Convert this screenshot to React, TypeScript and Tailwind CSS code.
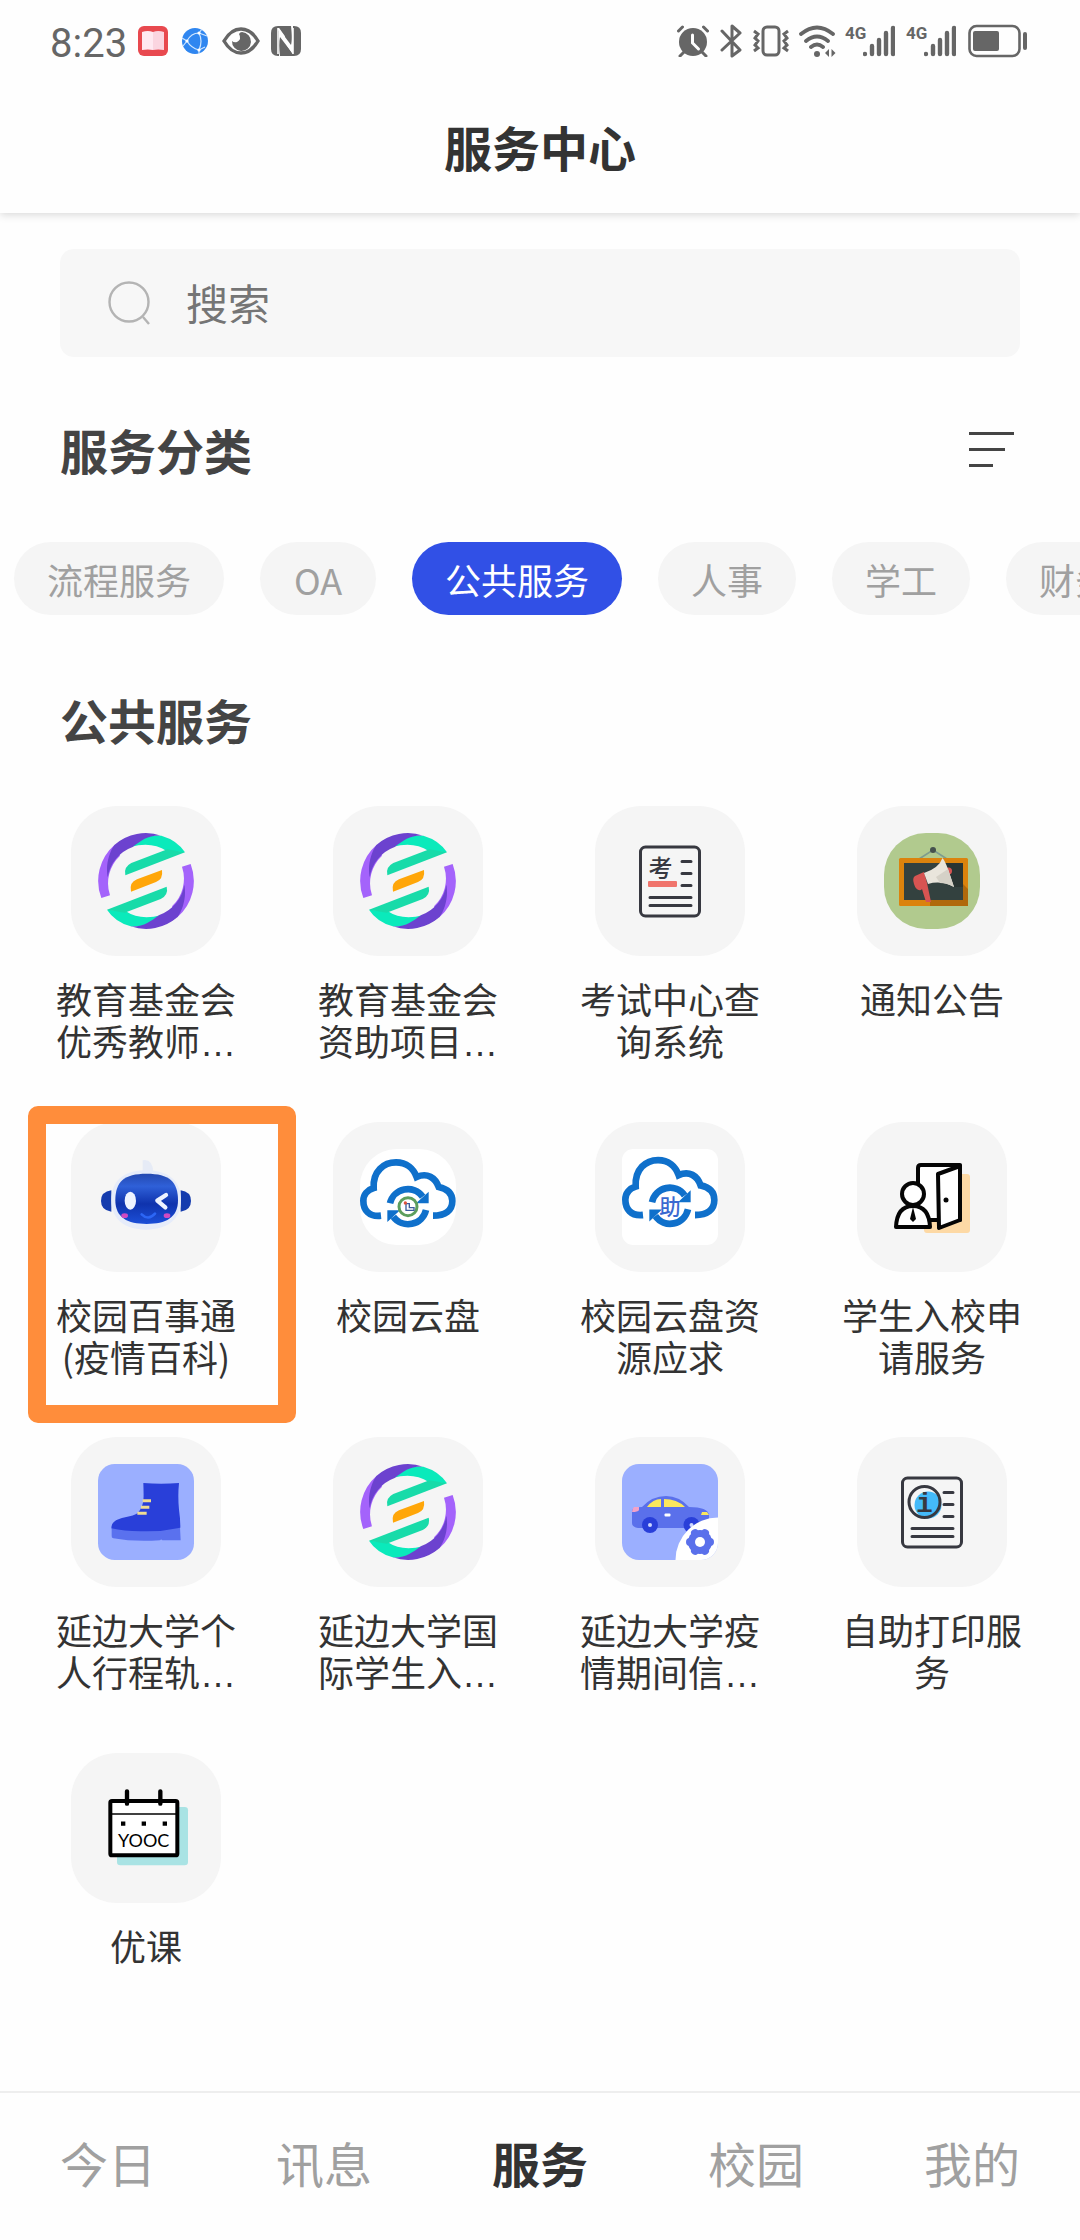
import { useState } from 'react';
import type { ReactNode } from 'react';

interface Service {
  name: string;
  truncated?: boolean;
  icon: ReactNode;
  highlighted?: boolean;
}

/* ---------- status bar ---------- */

function SignalIcon() {
  return (
    <div className="flex items-start">
      <span className="w-[18px] font-[Roboto,sans-serif] text-[17px] leading-[17px] font-bold">4G</span>
      <svg width="32" height="32" viewBox="0 0 32 32" fill="none" stroke="currentColor" strokeWidth="4.400" strokeLinecap="round">
        <path d="M2 29v0M9 21v8M16 15v14M23 8v21M30 3v26" />
      </svg>
    </div>
  );
}

function StatusBar() {
  return (
    <div className="flex h-[82px] items-center justify-between pr-[52px] pl-[50px] text-[#666]">
      <div className="flex items-center">
        <span className="mr-[11px] pt-[5px] font-[Roboto,sans-serif] text-[40px] leading-[40px]">8:23</span>
        <svg className="mr-[14px]" width="30" height="30" viewBox="0 0 30 30">
          <rect width="30" height="30" rx="6" fill="#e8494f" />
          <path d="M4 6q6-2 11 0v18q-5-1-11 0z" fill="#ffe9f1" />
          <path d="M15 6q5-2 11 0v18q-6-1-11 0z" fill="#fbd5e0" />
        </svg>
        <svg className="mr-[14px]" width="26" height="26" viewBox="0 0 26 26">
          <circle cx="13" cy="13" r="13" fill="#2f86f0" />
          <g fill="none" stroke="#cfe6ff" strokeWidth="1.2">
            <path d="M0 10l5 3Q9 5 17 5l3-4M5 13q4 7 12 9v4M17 5q4 8 0 17M5 13l-4 5M17 5l8 3M17 22l6-3" />
          </g>
          <g fill="#fff">
            <circle cx="5" cy="13" r="1.600" />
            <circle cx="17" cy="5" r="1.600" />
            <circle cx="17" cy="22" r="1.600" />
          </g>
        </svg>
        <svg className="mr-[11px]" width="38" height="28" viewBox="0 0 38 28">
          <path d="M2 14Q9 2 19 2t17 12q-7 12-17 12T2 14z" fill="none" stroke="currentColor" strokeWidth="3.400" />
          <path d="M20 5a9.500 9.500 0 1 1-10 9q2 2 5 1 5-3 2-8 1-2 3-2z" fill="currentColor" />
        </svg>
        <svg width="30" height="30" viewBox="0 0 30 30">
          <path d="M7 0h13c1 9 1 15 0 19L8 3v27H7q-7 0-7-7V7q0-7 7-7z" fill="currentColor" />
          <path d="M22 0h1q7 0 7 7v16q0 7-7 7H9c-1-8-1-14 0-19l13 17z" fill="currentColor" />
          <path d="M7 2v26M22 2v26M7.500 2.500l6 8.500M16 18l6 9" stroke="#fefefe" strokeWidth="1.600" fill="none" />
        </svg>
      </div>
      <div className="flex items-center">
        <svg className="mr-[11px]" width="32" height="32" viewBox="0 0 32 32">
          <circle cx="16" cy="17" r="14" fill="currentColor" />
          <path d="M1.500 6l4-4M30.500 6l-4-4M3 31l4-4M29 31l-4-4" stroke="currentColor" strokeWidth="3" strokeLinecap="round" />
          <path d="M15.500 10v8l6 6" fill="none" stroke="#fefefe" strokeWidth="3" strokeLinecap="round" />
        </svg>
        <svg className="mr-[10px]" width="22" height="34" viewBox="0 0 22 34">
          <path d="M2 7l18 19-8 6V2l8 7L2 26" fill="none" stroke="currentColor" strokeWidth="3" strokeLinecap="round" strokeLinejoin="round" />
        </svg>
        <svg className="mr-[9px]" width="38" height="32" viewBox="0 0 38 32" fill="none" stroke="currentColor" strokeWidth="3">
          <rect x="11" y="2" width="16" height="28" rx="4" />
          <path d="M2 6l4 3-3 4 3 3-3 4 3 3-4 3M36 6l-4 3 3 4-3 3 3 4-3 3 4 3" />
        </svg>
        <svg className="mr-[8px]" width="38" height="32" viewBox="0 0 38 32">
          <g fill="none" stroke="currentColor" strokeWidth="3.800" strokeLinecap="round">
            <path d="M2 9Q18-4 34 9M7 16q11-9 22 0M12 22q6-5 12 0" />
          </g>
          <circle cx="18" cy="29" r="3" fill="currentColor" />
          <path d="M30 24v8l-4-4zM32.500 24v8l4-4z" fill="currentColor" />
        </svg>
        <div className="mr-[11px]">
          <SignalIcon />
        </div>
        <div className="mr-[12px]">
          <SignalIcon />
        </div>
        <svg width="60" height="34" viewBox="0 0 60 34">
          <rect x="1.500" y="2" width="50" height="30" rx="7" fill="none" stroke="currentColor" strokeWidth="2.600" />
          <rect x="5" y="7" width="26" height="20" rx="2" fill="currentColor" />
          <path d="M57 10v14" stroke="currentColor" strokeWidth="4" strokeLinecap="round" />
        </svg>
      </div>
    </div>
  );
}

/* ---------- service icons ---------- */

function FoundationHalf() {
  return (
    <>
      <path d="M10 195A144 144 0 0 1 50 35L66 68A114 114 0 0 0 36 187z" fill="#a463fb" />
      <path d="M98 42Q130 2 190 8 238 22 261 58L206 54Q160 24 98 42z" fill="#0aeabb" />
      <path d="M29 133C22 95 34 56 50 35A144 144 0 0 1 190 8C150 6 132 22 104 42A116 116 0 0 0 29 133z" fill="#6c42cf" />
      <path d="M208 49l53 9L82 127q-6-25 18-37z" fill="#18dba9" />
    </>
  );
}

function FoundationIcon() {
  return (
    <svg className="size-24" viewBox="0 0 288 288">
      <FoundationHalf />
      <g transform="rotate(180 144 144)">
        <FoundationHalf />
      </g>
      <path d="M99 176q-6-28 18-37l75-28q4 28-18 36z" fill="#ffa609" />
    </svg>
  );
}

function DocFrame({ children }: { children: ReactNode }) {
  return (
    <svg className="size-24" viewBox="0 0 96 96">
      <g fill="none" stroke="#373840" strokeWidth="3">
        <rect x="18.500" y="14" width="59" height="69" rx="5" />
        <path d="M60 28.500h9M60 40.500h9M60 52.500h9M28 64.500h41M28 72.500h41" strokeLinecap="round" />
      </g>
      {children}
    </svg>
  );
}

function ExamIcon() {
  return (
    <DocFrame>
      <rect x="26" y="48" width="29" height="6" rx="1" fill="#f0746c" />
      <text x="26.500" y="44" fontSize="24" fontWeight="500" fontFamily="Noto Sans CJK SC, sans-serif" fill="#373840">考</text>
    </DocFrame>
  );
}

function PrintIcon() {
  return (
    <DocFrame>
      <circle cx="44" cy="41" r="13.500" fill="#44bafa" />
      <circle cx="40.500" cy="38" r="15.500" fill="none" stroke="#373840" strokeWidth="3" />
      <text x="40.500" y="48" fontSize="28" fontWeight="700" textAnchor="middle" fontFamily="Liberation Mono, monospace" fill="#373840">i</text>
    </DocFrame>
  );
}

function NoticeIcon() {
  return (
    <svg className="size-24" viewBox="0 0 96 96">
      <rect width="96" height="96" rx="42" fill="#b1ca8e" />
      <path d="M35 26l14-9 14 9" fill="none" stroke="#7e9c8e" strokeWidth="1.500" />
      <circle cx="49" cy="17" r="3" fill="#46524e" />
      <rect x="15" y="25" width="69" height="48" rx="1.500" fill="#db830d" />
      <path d="M78 50l6 6v17H46v-6h32z" fill="#b0690c" />
      <rect x="20" y="30" width="59" height="37" fill="#33413f" />
      <path d="M61 30h18v24H70z" fill="#2a3533" />
      <circle cx="64.500" cy="38" r="3.500" fill="#d75452" />
      <path d="M40 39l-9 4q-3 2-1 8 2 7 7 6l1-1 4 13h5l-4-19z" fill="#d75452" />
      <path d="M40 40Q55 35 58.500 25 61 28 64 36l6 18q-13-7-26-3z" fill="#e9e5dc" />
      <path d="M52 44l12-8 6 18q-7-4-14-4z" fill="#d5d1c7" />
    </svg>
  );
}

function RobotIcon() {
  return (
    <svg className="size-24" viewBox="0 0 288 288">
      <defs>
        <linearGradient id="face" x1="0" y1="0" x2="0" y2="1">
          <stop offset="0" stopColor="#2449b0" />
          <stop offset="0.250" stopColor="#2f60d8" />
          <stop offset="0.600" stopColor="#0f33ad" />
          <stop offset="1" stopColor="#1c4fd8" />
        </linearGradient>
      </defs>
      <path d="M134 68V34q28-6 32 34z" fill="#e6ebf6" />
      <path d="M40 124v64q-31-4-31-32t31-32zM248 124v64q31-4 31-32t-31-32z" fill="#153cae" />
      <path d="M144 64c70 0 105 34 105 90 0 58-43 88-105 88S40 212 40 154c0-56 34-90 104-90z" fill="#e6ecfa" />
      <path d="M146 74c68 0 94 24 94 80 0 52-36 71-94 71s-94-19-94-71c0-56 26-80 94-80z" fill="url(#face)" />
      <ellipse cx="97" cy="155" rx="17" ry="27" fill="#eef3ff" />
      <path d="M204 138l-26 17 24 20" fill="none" stroke="#eef3ff" strokeWidth="13" strokeLinecap="round" strokeLinejoin="round" />
      <ellipse cx="80" cy="200" rx="10" ry="7" fill="#d04ac2" />
      <ellipse cx="207" cy="200" rx="10" ry="7" fill="#d04ac2" />
      <path d="M131 196q20 20 40-2" fill="none" stroke="#2c66f5" strokeWidth="8" strokeLinecap="round" />
    </svg>
  );
}

function CloudShape() {
  return (
    <>
      <g fill="none" stroke="#0f70cb" strokeWidth="20">
        <path d="M63 200C26 204 10 182 10 155c0-18 12-32 31-38C38 66 72 40 108 40c32 0 53 19 62 44 32-14 56 2 66 30 28 6 41 22 41 42 0 28-20 44-58 44" />
        <path d="M90 163a55 55 0 0 1 98-20M198 183a55 55 0 0 1-98 20" />
      </g>
      <path d="M206 128v35h-38zM82 219v-35h38z" fill="#0f70cb" />
    </>
  );
}

function CloudIcon() {
  return (
    <svg className="size-24" viewBox="0 0 288 288">
      <rect width="288" height="288" rx="110" fill="#fff" />
      <CloudShape />
      <circle cx="144" cy="173" r="27" fill="#fff" stroke="#5c9e5d" strokeWidth="9" />
      <path d="M138 164v20h24v-8h-14v-12z" fill="none" stroke="#3c5c9c" strokeWidth="4" />
      <circle cx="136" cy="162" r="5" fill="#e0533c" />
    </svg>
  );
}

function CloudHelpIcon() {
  return (
    <svg className="size-24" viewBox="0 0 288 288">
      <rect width="288" height="288" rx="34" fill="#fff" />
      <g transform="translate(0 -8) scale(1 1.030)">
        <CloudShape />
      </g>
      <text x="144" y="198" fontSize="64" fontWeight="500" textAnchor="middle" fontFamily="Noto Sans CJK SC, sans-serif" fill="#3a69d0">助</text>
    </svg>
  );
}

function VisitorIcon() {
  return (
    <svg className="size-24" viewBox="0 0 96 96">
      <rect x="40" y="25" width="46" height="59" rx="3" fill="#fdd9a5" />
      <g fill="#fff" stroke="#050505" strokeWidth="4" strokeLinejoin="round">
        <path d="M34 71V19q0-3 3-3h39v55z" />
        <path d="M54 25l22-8v54l-21 8z" />
        <circle cx="29" cy="45" r="11" />
        <path d="M12 78q1-21 17-21t17 21z" />
      </g>
      <path d="M29 58l-3 12 3 3 3-3z" fill="#050505" />
      <circle cx="62" cy="51" r="2.500" fill="#050505" />
    </svg>
  );
}

function BootIcon() {
  return (
    <svg className="size-24" viewBox="0 0 288 288">
      <rect width="288" height="288" rx="50" fill="#9bafff" />
      <path d="M41 192l205-2 2 39h-55q-3-5-7 0-80 5-140-6-6-1-5-8z" fill="#5a71ee" />
      <path d="M136 57q53 5 107 0-4 40 0 80 4 26 4 54-55 12-110 11-55 1-97-9c0-40 66-28 82-50 18-20 15-46 14-86z" fill="#293fd9" />
      <path d="M134 110h25M129 130h25M118 148h28" stroke="#efdc92" strokeWidth="9" />
    </svg>
  );
}

function CarIcon() {
  return (
    <svg className="size-24" viewBox="0 0 96 96">
      <defs>
        <clipPath id="car-tile">
          <rect width="96" height="96" rx="17" />
        </clipPath>
      </defs>
      <g clipPath="url(#car-tile)">
        <rect width="96" height="96" fill="#9bafff" />
        <path d="M10 47q0-4 10-4 10-11 24-11 13 0 23 11 19 0 20 8v13H16q-6-1-6-5z" fill="#5a70eb" />
        <path d="M25 43q6-8 14-8v8zM42 35q13 0 21 8H42z" fill="#fbe75d" />
        <path d="M12 43h5v3q-1 2-7 2 0-3 2-5z" fill="#f3a2c8" />
        <path d="M80 48h5l2 3h-8z" fill="#fbe75d" />
        <rect x="42.500" y="49.500" width="6" height="3" rx="1" fill="#fff" />
        <circle cx="28" cy="61" r="8" fill="#293fd9" />
        <circle cx="28" cy="61" r="2" fill="#cdd7ff" />
        <circle cx="69.500" cy="61" r="8" fill="#293fd9" />
        <circle cx="69.500" cy="61" r="2" fill="#cdd7ff" />
        <circle cx="96" cy="96" r="42.500" fill="#fff" />
      </g>
      <g stroke="#5a70eb" strokeWidth="8" strokeLinecap="round">
        <path d="M68 78h20M73 69.300l10 17.400M73 86.700l10-17.400" />
      </g>
      <circle cx="78" cy="78" r="12" fill="#5a70eb" />
      <circle cx="78" cy="78" r="5" fill="#fff" />
    </svg>
  );
}

function CourseIcon() {
  return (
    <svg className="size-24" viewBox="0 0 288 288">
      <rect x="57" y="81" width="213" height="175" rx="10" fill="#a9e3e4" />
      <rect x="37" y="63" width="201" height="163" rx="5" fill="#fff" stroke="#000" strokeWidth="12" />
      <path d="M37 102h201" stroke="#000" strokeWidth="5" />
      <path d="M87 34v37M187 34v37" stroke="#000" strokeWidth="13" strokeLinecap="round" />
      <path d="M69 131h13M131 131h13M194 131h13" stroke="#000" strokeWidth="13" />
      <text x="137" y="201" fontSize="54" textAnchor="middle" fontFamily="Lato, sans-serif" fill="#000">YOOC</text>
    </svg>
  );
}

/* ---------- data ---------- */

const categories = ['流程服务', 'OA', '公共服务', '人事', '学工', '财务'];

const services: Service[] = [
  { name: '教育基金会优秀教师', truncated: true, icon: <FoundationIcon /> },
  { name: '教育基金会资助项目', truncated: true, icon: <FoundationIcon /> },
  { name: '考试中心查询系统', icon: <ExamIcon /> },
  { name: '通知公告', icon: <NoticeIcon /> },
  { name: '校园百事通(疫情百科)', icon: <RobotIcon />, highlighted: true },
  { name: '校园云盘', icon: <CloudIcon /> },
  { name: '校园云盘资源应求', icon: <CloudHelpIcon /> },
  { name: '学生入校申请服务', icon: <VisitorIcon /> },
  { name: '延边大学个人行程轨', truncated: true, icon: <BootIcon /> },
  { name: '延边大学国际学生入', truncated: true, icon: <FoundationIcon /> },
  { name: '延边大学疫情期间信', truncated: true, icon: <CarIcon /> },
  { name: '自助打印服务', icon: <PrintIcon /> },
  { name: '优课', icon: <CourseIcon /> },
];

const tabs = ['今日', '讯息', '服务', '校园', '我的'];

function ServiceItem({ service }: { service: Service }) {
  return (
    <li className="relative flex justify-center">
      <a href="#" className="flex flex-col items-center">
        <span className="flex size-[150px] items-center justify-center rounded-[46px] bg-[#f5f5f5]">
          {service.icon}
        </span>
        <span className="mt-[21px] mb-[3px] min-h-[84px] w-[184px] text-center text-[36px] leading-[42px] text-[#333]">
          {service.name}
          {service.truncated && (
            <span className="font-['Liberation_Sans',sans-serif] leading-none">…</span>
          )}
        </span>
      </a>
      {service.highlighted && (
        <span className="pointer-events-none absolute -top-4 -right-[19px] left-[13px] h-[317px] rounded-[10px] border-[18px] border-[#ff8d3b]" />
      )}
    </li>
  );
}

export default function App() {
  const [category, setCategory] = useState('公共服务');
  const [tab, setTab] = useState('服务');

  return (
    <div className="flex min-h-screen flex-col bg-[#fefefe] font-['Noto_Sans_CJK_SC',sans-serif] text-[#333]">
      <header className="bg-[#fefefe] shadow-[0_2px_8px_rgba(0,0,0,0.15)]">
        <StatusBar />
        <h1 className="pb-[3px] text-center text-[48px] leading-[128px] font-bold">服务中心</h1>
      </header>

      <main className="flex-1 pb-12">
        <label className="mx-[60px] mt-9 flex h-[108px] items-center rounded-[14px] bg-[#f7f7f7] pl-12">
          <svg className="mr-9 shrink-0" width="42" height="44" viewBox="0 0 42 44" fill="none" stroke="#b4b4b4" strokeWidth="2.400">
            <circle cx="21" cy="21" r="19.500" />
            <path d="M35 36l6 7" />
          </svg>
          <input
            type="search"
            aria-label="搜索"
            placeholder="搜索"
            className="min-w-0 flex-1 bg-transparent pb-[2px] text-[42px] leading-[60px] outline-none placeholder:text-[#757575]"
          />
        </label>

        <div className="mx-[60px] mt-16 flex items-center justify-between">
          <h2 className="text-[48px] leading-[56px] font-bold text-[#444]">服务分类</h2>
          <button type="button" aria-label="分类" className="px-[6px]">
            <svg width="45" height="36" viewBox="0 0 45 36" stroke="#444" strokeWidth="3">
              <path d="M0 2.500h45M0 18.500h36M0 34.500h24" />
            </svg>
          </button>
        </div>

        <div className="mt-[65px] flex gap-9 overflow-x-auto pl-[14px] [scrollbar-width:none]">
          {categories.map((name) => (
            <button
              key={name}
              type="button"
              onClick={() => setCategory(name)}
              className={`h-[73px] min-w-[116px] shrink-0 rounded-full px-[33px] text-[36px] leading-[72px] ${
                name === category ? 'bg-[#3150e6] text-white' : 'bg-[#f5f5f5] text-[#a0a0a0]'
              }`}
            >
              {name}
            </button>
          ))}
        </div>

        <h2 className="mx-[60px] mt-[76px] text-[48px] leading-[56px] font-bold text-[#444]">{category}</h2>

        <ul className="mt-[59px] grid grid-cols-4 gap-y-[57px] pr-[17px] pl-[15px]">
          {services.map((service) => (
            <ServiceItem key={service.name} service={service} />
          ))}
        </ul>
      </main>

      <nav className="grid grid-cols-5 border-t-2 border-[#eee]">
        {tabs.map((name) => (
          <button
            key={name}
            type="button"
            onClick={() => setTab(name)}
            className={`h-[147px] pb-[10px] text-[48px] leading-[72px] ${name === tab ? 'font-bold text-[#333]' : 'text-[#a0a0a0]'}`}
          >
            {name}
          </button>
        ))}
      </nav>
    </div>
  );
}
